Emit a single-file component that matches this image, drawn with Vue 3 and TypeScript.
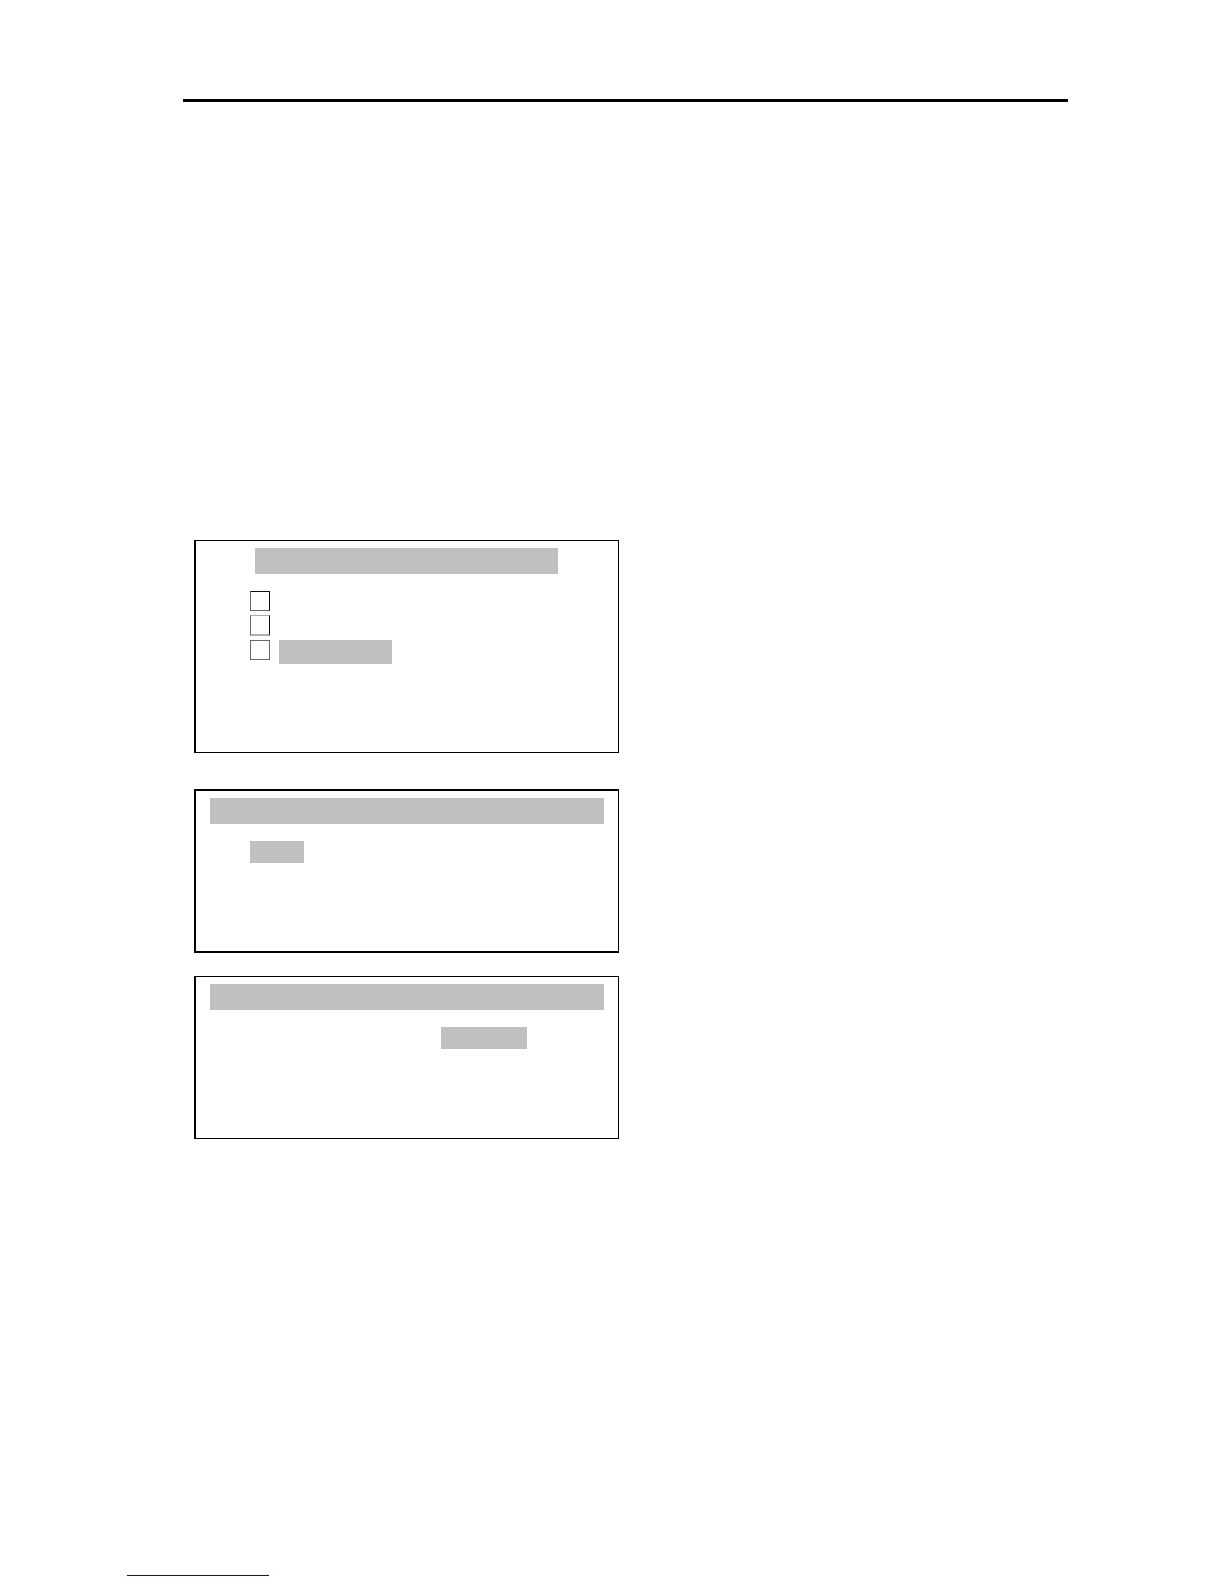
<script setup lang="ts">
import { ref } from 'vue'

interface Option {
  id: string
  tone: 'dark' | 'light' | 'mid'
  highlighted: boolean
}

const options: Option[] = [
  { id: 'option-1', tone: 'dark', highlighted: false },
  { id: 'option-2', tone: 'light', highlighted: false },
  { id: 'option-3', tone: 'mid', highlighted: true },
]

const checked = ref<string[]>([])
</script>

<template>
  <main class="page">
    <hr class="header-rule" />

    <div class="panels">
      <section class="panel panel-options">
        <div class="title title-inset"></div>
        <div class="options">
          <label v-for="option in options" :key="option.id" class="option" :for="option.id">
            <input
              :id="option.id"
              v-model="checked"
              class="box"
              :class="option.tone"
              type="checkbox"
              :value="option.id"
            />
            <span v-if="option.highlighted" class="highlight option-highlight"></span>
          </label>
        </div>
      </section>

      <section class="panel panel-heavy">
        <div class="title"></div>
        <div class="row">
          <div class="highlight short"></div>
        </div>
      </section>

      <section class="panel">
        <div class="title"></div>
        <div class="row row-end">
          <div class="highlight long"></div>
        </div>
      </section>
    </div>

    <hr class="footer-rule" />
  </main>
</template>

<style>
body {
  margin: 0;
  background: #fff;
  font-family: "Liberation Sans", sans-serif;
}
</style>

<style scoped>
.page {
  box-sizing: border-box;
  min-height: 100vh;
  display: flex;
  flex-direction: column;
  padding: 99px 156px 8px 183px;
  background: #fff;
}

.header-rule {
  width: 100%;
  height: 3px;
  margin: 0;
  border: 0;
  background: #000;
}

.panels {
  display: flex;
  flex-direction: column;
  margin: 438px 0 0 11px;
  width: 48%;
}

.panel {
  box-sizing: border-box;
  min-height: 163px;
  padding: 7px 14px;
  border: 1px solid #000;
  border-left-width: 2px;
}

.panel-options {
  min-height: 213px;
  margin-bottom: 36px;
}

.panel-heavy {
  min-height: 164px;
  margin-bottom: 23px;
  border-top-width: 2px;
  border-bottom-width: 2px;
}

.title {
  height: 26px;
  background: #c0c0c0;
}

.title-inset {
  margin: 0 46px 0 45px;
}

.options {
  display: flex;
  flex-direction: column;
  gap: 4px;
  margin: 17px 0 0 40px;
}

.option {
  display: flex;
  align-items: flex-start;
  gap: 9px;
}

.box {
  appearance: none;
  box-sizing: border-box;
  width: 20px;
  height: 20px;
  margin: 0;
  border: 1px solid #666;
  background: #fff;
}

.box:checked {
  background: #000;
}

.dark {
  border-top-color: #111;
  border-right-color: #111;
}

.light {
  height: 21px;
  border-top-color: #aaa;
  border-right-color: #111;
  border-bottom: 2px solid #b0b0b0;
}

.highlight {
  height: 22px;
  background: #c0c0c0;
}

.option-highlight {
  width: 113px;
  height: 24px;
}

.row {
  display: flex;
  margin: 17px 0 0 40px;
}

.row-end {
  justify-content: flex-end;
  margin-right: 77px;
}

.short {
  width: 54px;
}

.long {
  width: 86px;
}

.footer-rule {
  width: 142px;
  height: 1px;
  margin: auto 0 0 -56px;
  border: 0;
  background: #0c0c98;
}
</style>
